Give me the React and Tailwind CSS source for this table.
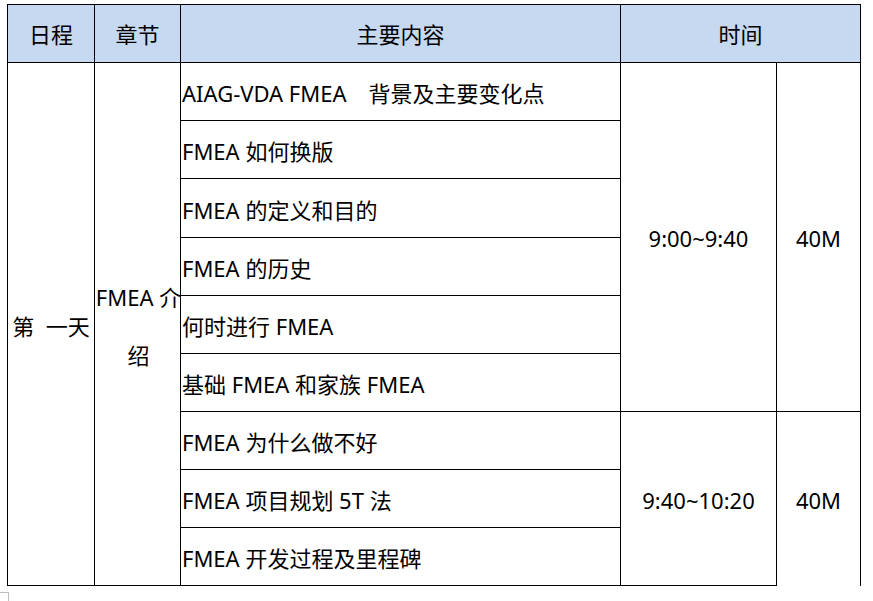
import React from "react";

const items = [
  "AIAG-VDA FMEA\u3000背景及主要变化点",
  "FMEA 如何换版",
  "FMEA 的定义和目的",
  "FMEA 的历史",
  "何时进行 FMEA",
  "基础 FMEA 和家族 FMEA",
  "FMEA 为什么做不好",
  "FMEA 项目规划 5T 法",
  "FMEA 开发过程及里程碑",
];

const rowStarts = [
  "row-start-2",
  "row-start-3",
  "row-start-4",
  "row-start-5",
  "row-start-6",
  "row-start-7",
  "row-start-8",
  "row-start-9",
  "row-start-10",
];

export default function App() {
  return (
    <div className="bg-white w-[873px] h-[601px] overflow-hidden text-black text-[22px] leading-none font-['Noto_Sans','Noto_Sans_CJK_SC',sans-serif]">
      <div className="pt-[4px] pl-[7px]">
        <div className="grid grid-cols-[87px_86px_440px_156px_85px] grid-rows-[58px_58px_58px_59px_58px_58px_58px_58px_58px_59px] w-[854px]">
          <div className="col-start-1 row-start-1 border-l border-t border-black bg-[#c6d9f0] flex items-center justify-center pt-[1px]">日程</div>
          <div className="col-start-2 row-start-1 border-l border-t border-black bg-[#c6d9f0] flex items-center justify-center pt-[1px]">章节</div>
          <div className="col-start-3 row-start-1 border-l border-t border-black bg-[#c6d9f0] flex items-center justify-center pt-[1px]">主要内容</div>
          <div className="col-start-4 col-span-2 row-start-1 border-l border-t border-r border-black bg-[#c6d9f0] flex items-center justify-center pt-[1px]">时间</div>

          <div className="col-start-1 row-start-2 row-span-9 border-l border-t border-b border-black flex items-center justify-center pt-[4px]">
            <span className="whitespace-pre">第  一天</span>
          </div>
          <div className="col-start-2 row-start-2 row-span-9 border-l border-t border-b border-black flex items-center justify-center">
            <div className="text-center leading-[58px] pt-[3px] whitespace-pre -mr-[2px]">
              {"FMEA 介\n绍"}
            </div>
          </div>

          {items.map((t, i) => (
            <div
              key={i}
              className={`col-start-3 ${rowStarts[i]} border-l border-t border-black flex items-center pl-px pt-[3px] whitespace-pre ${i === 8 ? "border-b" : ""}`}
            >
              {t}
            </div>
          ))}

          <div className="col-start-4 row-start-2 row-span-6 border-l border-t border-black flex items-center justify-center pt-[2px]">9:00~9:40</div>
          <div className="col-start-5 row-start-2 row-span-6 border-l border-t border-r border-black flex items-center justify-center pt-[2px]">40M</div>
          <div className="col-start-4 row-start-8 row-span-3 border-l border-t border-b border-black flex items-center justify-center pt-[2px]">9:40~10:20</div>
          <div className="col-start-5 row-start-8 row-span-3 border-l border-t border-r border-black flex items-center justify-center pt-[2px]">40M</div>
        </div>
        <div className="-ml-[7px] mt-[6px] w-[9px] h-[20px] border-t border-r border-[#bdbdbd]"></div>
      </div>
    </div>
  );
}
